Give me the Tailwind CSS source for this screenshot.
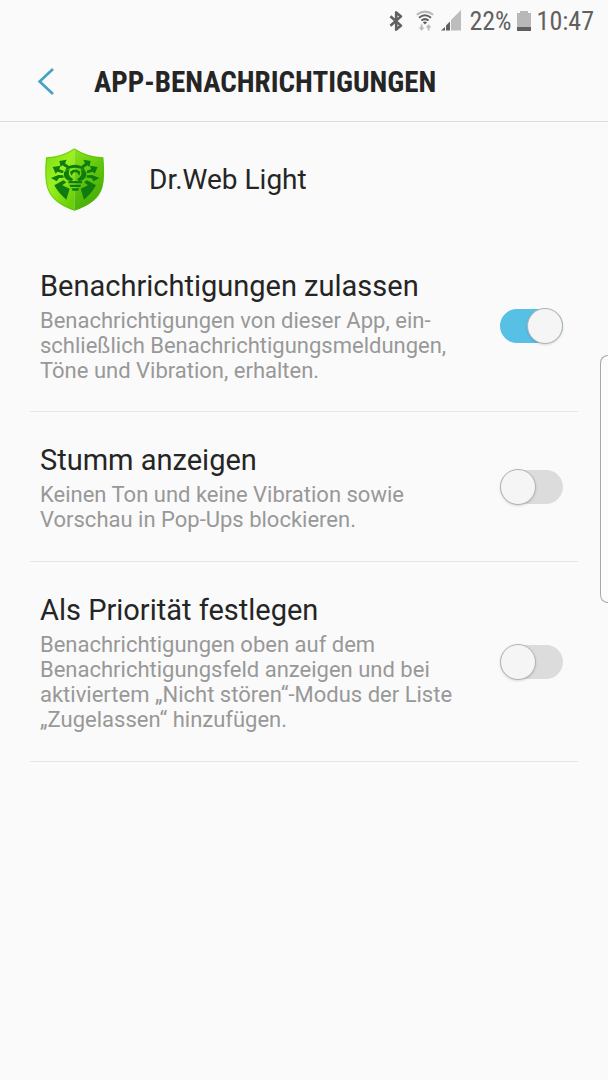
<!DOCTYPE html>
<html lang="de">
<head>
<meta charset="utf-8">
<meta name="viewport" content="width=device-width, initial-scale=1">
<title>App-Benachrichtigungen</title>
<script src="https://cdn.jsdelivr.net/npm/@tailwindcss/browser@4"></script>
</head>
<body class="relative min-h-screen overflow-x-hidden bg-[#fafafa] font-['Roboto',sans-serif] text-[#252525]">

<!-- Status bar -->
<div class="flex h-[42px] items-center justify-end pr-[14px] font-['Roboto_Condensed','Roboto',sans-serif] text-[26px] leading-none text-[#606060]">
  <svg class="h-[22px] w-[14px]" viewBox="0 0 14 22" fill="none" stroke="#606060" stroke-width="2.6" stroke-linejoin="round" aria-label="Bluetooth"><path d="M1.4 6.2 12 15.6 7.2 19.6V2.4L12 6.4 1.4 15.8"/></svg>
  <svg class="ml-[13px] h-[22px] w-[18px]" viewBox="0 0 18 22" fill="none" aria-label="WLAN">
    <path d="M.8 4.8Q9-1.6 17.2 4.8" stroke="#b8b8b8" stroke-width="2"/>
    <path d="M3 7.8Q9 2.8 15 7.8M5.4 10.6Q9 7.6 12.6 10.6" stroke="#606060" stroke-width="2"/>
    <path d="M6.8 12.2Q9 10.7 11.2 12.2L9 14.4Z" fill="#606060"/>
    <path d="M5.6 14.5V19M12.6 20.4V16" stroke="#b8b8b8" stroke-width="1.8"/>
    <path d="M2.8 17.4H8.4L5.6 20.8ZM9.8 17.6H15.4L12.6 14.2Z" fill="#b8b8b8"/>
  </svg>
  <svg class="ml-[7px] h-[22px] w-[20px]" viewBox="0 0 20 22" aria-label="Signal"><path d="M0 20.5 4 17V20.5ZM5 20.5V15.5L9 11.5V20.5Z" fill="#606060"/><path d="M10 20.5V10L20 0V20.5Z" fill="#bdbdbd"/></svg>
  <span class="ml-2">22%</span>
  <svg class="ml-[5px] h-[22px] w-[14px]" viewBox="0 0 14 22" aria-label="Akku"><path d="M0 3H3V1H11V3H14V17H0Z" fill="#b8b8b8"/><path d="M0 17H14V21H0Z" fill="#606060"/></svg>
  <span class="ml-[6px]">10:47</span>
</div>

<header class="flex h-20 items-center border-b border-[#dedede] pl-8">
  <button type="button" aria-label="Zurück" class="flex w-[62px] justify-start pl-[5px]">
    <svg class="h-7 w-[18px]" viewBox="0 0 18 28" fill="none" stroke="#46a0c6" stroke-width="2.6"><path d="M16 1 2.6 13.5 16 26"/></svg>
  </button>
  <h1 class="font-['Roboto_Condensed','Roboto',sans-serif] text-[29px] font-bold leading-9">APP-BENACHRICHTIGUNGEN</h1>
</header>

<main>
  <div class="flex h-[116px] items-center gap-[43px] pl-11">
    <svg class="h-[65px] w-[62px]" viewBox="30 27 186 195" aria-hidden="true">
      <defs>
        <linearGradient id="shieldLeft" x1="0" y1="0" x2=".7" y2="1"><stop offset="0" stop-color="#78dc10"/><stop offset=".5" stop-color="#9cf020"/><stop offset="1" stop-color="#6ad008"/></linearGradient>
        <linearGradient id="shieldRight" x1="0" y1="0" x2=".4" y2="1"><stop offset="0" stop-color="#8ae41c"/><stop offset=".5" stop-color="#62c80c"/><stop offset="1" stop-color="#46ac08"/></linearGradient>
      </defs>
      <path d="M121 28Q82 54 36 55Q30 114 39 146Q52 192 121 215Z" fill="url(#shieldLeft)"/>
      <path d="M121 28Q160 54 208 55Q214 114 205 146Q192 192 121 215Z" fill="url(#shieldRight)"/>
      <path d="M121 30Q82 56 38 57Q32 114 41 146Q54 190 121 213Q190 190 203 146Q212 114 206 57Q160 56 121 30Z" fill="none" stroke="#58bc10" stroke-opacity=".6" stroke-width="3"/>
      <g fill="#0f7c10">
        <path d="M92 96Q100 77 123 77Q146 77 155 96Q140 86 123 86Q107 86 92 96Z"/>
        <path d="M90 100Q96 92 107 90Q101 106 110 115L118 121L112 126Q86 124 90 100ZM157 100Q151 92 140 90Q146 106 137 115L129 121L135 126Q160 124 157 100Z"/>
        <path d="M108 98 118 92H129L139 98 136 110 130 101 124 99 118 101 112 110Z"/>
        <path d="M103 126H144V133H104ZM106 137H141L139 144H109ZM112 148H136L132 155H116Z"/>
        <path d="M76 66 98 62 93 73 106 82 100 88 85 79 80 84ZM170 66 148 62 153 73 141 82 147 88 161 79 166 84Z"/>
        <path d="M56 84 79 80 76 91 89 95 87 103 70 98 65 104ZM191 84 168 80 171 91 158 95 160 103 177 98 182 104Z"/>
        <path d="M51 117 73 108 88 109 89 116 75 117 68 127ZM196 117 174 108 159 109 158 116 172 117 179 127Z"/>
        <path d="M61 139 88 124 97 130 85 139 107 149 97 182Q73 162 61 139ZM186 139 159 124 150 130 162 139 140 149 150 182Q174 162 186 139Z"/>
      </g>
    </svg>
    <h2 class="text-[28px] leading-9">Dr.Web Light</h2>
  </div>

  <div class="mx-[30px]">
    <label class="flex cursor-pointer items-center justify-between border-b border-[#e6e6e6] pb-7 pl-[10px] pr-[15px] pt-[30px]">
      <span class="block">
        <span class="block text-[29px] leading-9">Benachrichtigungen zulassen</span>
        <span class="mt-1 block text-[22px] leading-[25px] text-[#989898]">Benachrichtigungen von dieser App, ein-<br>schließlich Benachrichtigungsmeldungen,<br>Töne und Vibration, erhalten.</span>
      </span>
      <span class="relative block h-9 w-[63px] shrink-0">
        <input type="checkbox" role="switch" checked class="peer absolute inset-x-0 inset-y-px h-[34px] w-full cursor-pointer appearance-none rounded-full bg-[#dcdcdc] checked:bg-[#56c0e5]">
        <span class="pointer-events-none absolute left-0 top-0 size-9 rounded-full border border-[#b2b2b2] bg-[#f5f5f5] shadow-sm peer-checked:left-[27px]"></span>
      </span>
    </label>

    <label class="flex cursor-pointer items-center justify-between border-b border-[#e6e6e6] pb-[29px] pl-[10px] pr-[15px] pt-[30px]">
      <span class="block">
        <span class="block text-[29px] leading-9">Stumm anzeigen</span>
        <span class="mt-1 block text-[22px] leading-[25px] text-[#989898]">Keinen Ton und keine Vibration sowie<br>Vorschau in Pop-Ups blockieren.</span>
      </span>
      <span class="relative block h-9 w-[63px] shrink-0">
        <input type="checkbox" role="switch" class="peer absolute inset-x-0 inset-y-px h-[34px] w-full cursor-pointer appearance-none rounded-full bg-[#dcdcdc] checked:bg-[#56c0e5]">
        <span class="pointer-events-none absolute left-0 top-0 size-9 rounded-full border border-[#b2b2b2] bg-[#f5f5f5] shadow-sm peer-checked:left-[27px]"></span>
      </span>
    </label>

    <label class="flex cursor-pointer items-center justify-between border-b border-[#e6e6e6] pb-[29px] pl-[10px] pr-[15px] pt-[30px]">
      <span class="block">
        <span class="block text-[29px] leading-9">Als Priorität festlegen</span>
        <span class="mt-1 block text-[22px] leading-[25px] text-[#989898]">Benachrichtigungen oben auf dem<br>Benachrichtigungsfeld anzeigen und bei<br>aktiviertem „Nicht stören“-Modus der Liste<br>„Zugelassen“ hinzufügen.</span>
      </span>
      <span class="relative block h-9 w-[63px] shrink-0">
        <input type="checkbox" role="switch" class="peer absolute inset-x-0 inset-y-px h-[34px] w-full cursor-pointer appearance-none rounded-full bg-[#dcdcdc] checked:bg-[#56c0e5]">
        <span class="pointer-events-none absolute left-0 top-0 size-9 rounded-full border border-[#b2b2b2] bg-[#f5f5f5] shadow-sm peer-checked:left-[27px]"></span>
      </span>
    </label>
  </div>
</main>

<!-- Edge panel handle -->
<div class="absolute right-0 top-[355px] h-[248px] w-2 rounded-l-xl border border-r-0 border-[#a8a8a8] bg-[#fcfcfc]"></div>
</body>
</html>
